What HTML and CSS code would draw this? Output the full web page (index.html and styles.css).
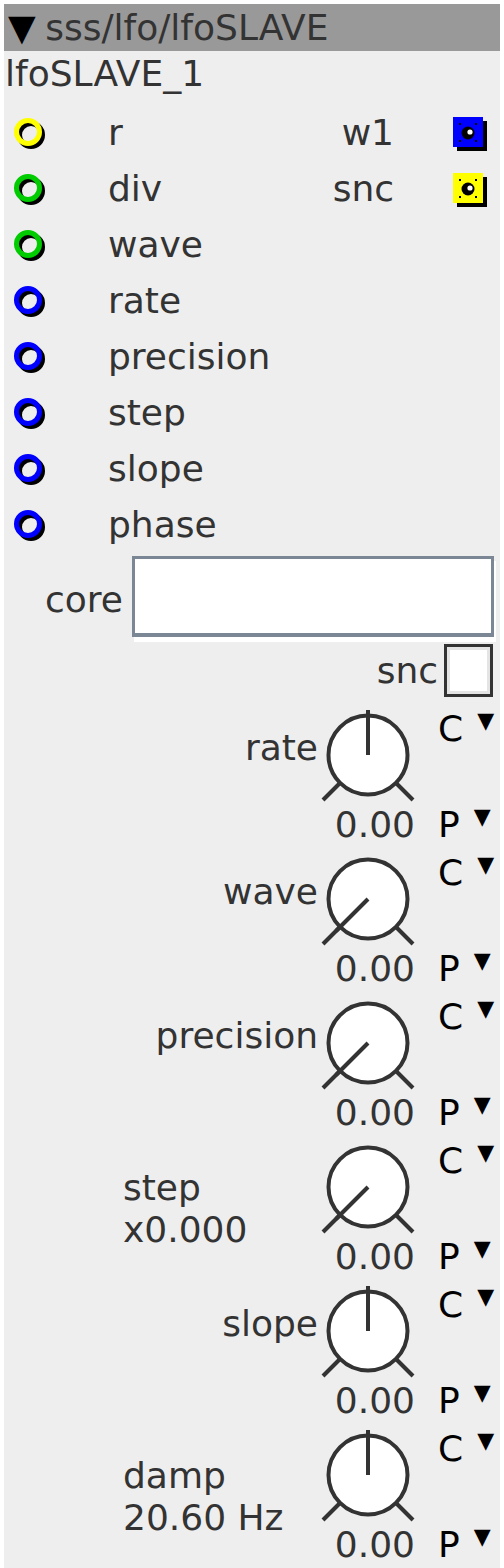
FILE: index.html
```html
<!DOCTYPE html>
<html>
<head>
    <title>lfoSLAVE_1</title>
    <link rel="stylesheet" href="styles.css">
</head>
<body>
    <svg class="defs" width="0" height="0">
        <defs>
            <symbol id="jack" viewBox="0 0 36 36">
                <circle cx="21" cy="21" r="11.5" fill="none" stroke="#000" stroke-width="5"/>
                <circle cx="18" cy="18" r="11.5" fill="none" stroke="currentColor" stroke-width="5"/>
            </symbol>
            <symbol id="plug" viewBox="0 0 38 38">
                <rect x="5" y="8" width="30" height="30" fill="#000"/>
                <rect x="1" y="4" width="30" height="30" fill="currentColor"/>
                <circle cx="16" cy="20" r="6.5" fill="#000"/>
                <circle cx="18" cy="19" r="2.6" fill="#fff"/>
                <rect x="7" y="10" width="2" height="2" fill="#000"/>
                <rect x="23" y="10" width="2" height="2" fill="#000"/>
                <rect x="7" y="27" width="2" height="2" fill="#000"/>
                <rect x="23" y="27" width="2" height="2" fill="#000"/>
            </symbol>
            <symbol id="knob" viewBox="0 0 94 96">
                <line x1="22" y1="73" x2="2" y2="93" stroke="#333" stroke-width="4"/>
                <line x1="72" y1="73" x2="92" y2="93" stroke="#333" stroke-width="4"/>
                <circle cx="47" cy="48" r="39.5" fill="#fff" stroke="#333" stroke-width="4"/>
            </symbol>
        </defs>
    </svg>

    <div class="node">
        <div class="title"><span class="tri">▼</span> sss/lfo/lfoSLAVE</div>
        <div class="name">lfoSLAVE_1</div>

        <div class="ports">
            <div class="port-row">
                <svg class="jack yellow"><use href="#jack"/></svg>
                <span class="in-label">r</span>
                <span class="out-label">w1</span>
                <svg class="plug blue"><use href="#plug"/></svg>
            </div>
            <div class="port-row">
                <svg class="jack green"><use href="#jack"/></svg>
                <span class="in-label">div</span>
                <span class="out-label">snc</span>
                <svg class="plug yellow"><use href="#plug"/></svg>
            </div>
            <div class="port-row">
                <svg class="jack green"><use href="#jack"/></svg>
                <span class="in-label">wave</span>
            </div>
            <div class="port-row">
                <svg class="jack blue"><use href="#jack"/></svg>
                <span class="in-label">rate</span>
            </div>
            <div class="port-row">
                <svg class="jack blue"><use href="#jack"/></svg>
                <span class="in-label">precision</span>
            </div>
            <div class="port-row">
                <svg class="jack blue"><use href="#jack"/></svg>
                <span class="in-label">step</span>
            </div>
            <div class="port-row">
                <svg class="jack blue"><use href="#jack"/></svg>
                <span class="in-label">slope</span>
            </div>
            <div class="port-row">
                <svg class="jack blue"><use href="#jack"/></svg>
                <span class="in-label">phase</span>
            </div>
        </div>

        <div class="field-row">
            <span class="field-label">core</span>
            <div class="field"></div>
        </div>

        <div class="check-row">
            <span>snc</span>
            <div class="check"></div>
        </div>

        <div class="knobs">
            <div class="knob-row">
                <div class="k-label">rate</div>
                <svg class="knob" viewBox="0 0 94 96"><use href="#knob"/><line x1="47" y1="48" x2="47" y2="3"/></svg>
                <div class="k-mode top">C<span class="arrow">▼</span></div>
                <div class="k-value">0.00</div>
                <div class="k-mode">P<span class="arrow">▼</span></div>
            </div>
            <div class="knob-row">
                <div class="k-label">wave</div>
                <svg class="knob" viewBox="0 0 94 96"><use href="#knob"/><line x1="47" y1="48" x2="15" y2="80"/></svg>
                <div class="k-mode top">C<span class="arrow">▼</span></div>
                <div class="k-value">0.00</div>
                <div class="k-mode">P<span class="arrow">▼</span></div>
            </div>
            <div class="knob-row">
                <div class="k-label">precision</div>
                <svg class="knob" viewBox="0 0 94 96"><use href="#knob"/><line x1="47" y1="48" x2="15" y2="80"/></svg>
                <div class="k-mode top">C<span class="arrow">▼</span></div>
                <div class="k-value">0.00</div>
                <div class="k-mode">P<span class="arrow">▼</span></div>
            </div>
            <div class="knob-row">
                <div class="k-label two">step<br>x0.000</div>
                <svg class="knob" viewBox="0 0 94 96"><use href="#knob"/><line x1="47" y1="48" x2="15" y2="80"/></svg>
                <div class="k-mode top">C<span class="arrow">▼</span></div>
                <div class="k-value">0.00</div>
                <div class="k-mode">P<span class="arrow">▼</span></div>
            </div>
            <div class="knob-row">
                <div class="k-label">slope</div>
                <svg class="knob" viewBox="0 0 94 96"><use href="#knob"/><line x1="47" y1="48" x2="47" y2="3"/></svg>
                <div class="k-mode top">C<span class="arrow">▼</span></div>
                <div class="k-value">0.00</div>
                <div class="k-mode">P<span class="arrow">▼</span></div>
            </div>
            <div class="knob-row">
                <div class="k-label two">damp<br>20.60 Hz</div>
                <svg class="knob" viewBox="0 0 94 96"><use href="#knob"/><line x1="47" y1="48" x2="47" y2="3"/></svg>
                <div class="k-mode top">C<span class="arrow">▼</span></div>
                <div class="k-value">0.00</div>
                <div class="k-mode">P<span class="arrow">▼</span></div>
            </div>
        </div>
    </div>
</body>
</html>
```

FILE: styles.css
```css
body {
    margin: 0;
    background-color: #fff;
    font-family: "DejaVu Sans", sans-serif;
}
.defs {
    position: absolute;
}
.node {
    margin: 4px 4px 0 4px;
    width: 496px;
    min-height: 1600px;
    background-color: #eee;
    color: #333;
    font-size: 36px;
}
.title {
    height: 47px;
    line-height: 47px;
    padding-left: 4px;
    background-color: #999;
    white-space: nowrap;
    word-spacing: -2px;
}
.tri {
    color: #000;
}
.name {
    height: 53px;
    line-height: 46px;
    padding-left: 1px;
}
.port-row {
    display: grid;
    grid-template-columns: 104px 1fr auto 106px;
    align-items: center;
    height: 56px;
}
.jack {
    width: 36px;
    height: 36px;
    margin-left: 6px;
}
.plug {
    width: 38px;
    height: 38px;
    margin-left: 58px;
}
.yellow { color: #ffff00; }
.green { color: #00cc00; }
.blue { color: #0000ff; }
.out-label {
    grid-column: 3;
}
.field-row {
    display: flex;
    justify-content: flex-end;
    align-items: center;
    margin-top: 4px;
    padding-right: 6px;
}
.field-label {
    margin-right: 9px;
    padding-top: 5px;
}
.field {
    width: 362px;
    height: 81px;
    box-sizing: border-box;
    border: 3px solid #7b8794;
    border-bottom-width: 4px;
    background-color: #fff;
    box-shadow: 2px 5px 0 #fff;
}
.check-row {
    display: flex;
    justify-content: flex-end;
    align-items: center;
    gap: 6px;
    margin-top: 7px;
    padding-right: 7px;
}
.check {
    width: 49px;
    height: 53px;
    box-sizing: border-box;
    border: 3px solid #333;
    background-color: #fff;
    box-shadow: inset 0 0 0 3px #e4e4e4;
}
.knobs {
    margin-top: 6px;
}
.knob-row {
    display: grid;
    grid-template-columns: 316px 96px 84px;
    grid-template-rows: 100px 44px;
    height: 144px;
}
.k-label {
    grid-row: 1;
    grid-column: 1;
    margin-top: 23px;
    line-height: 44px;
    text-align: right;
    padding-right: 2px;
}
.k-label.two {
    margin-top: 32px;
    line-height: 42px;
    text-align: left;
    padding-left: 119px;
}
.knob {
    grid-row: 1;
    grid-column: 2;
    width: 94px;
    height: 96px;
    margin: 4px 0 0 1px;
}
.knob line {
    stroke: #333;
    stroke-width: 4;
}
.k-value {
    grid-row: 2;
    grid-column: 2;
    line-height: 44px;
    text-align: right;
    padding-right: 1px;
}
.k-mode {
    grid-row: 2;
    grid-column: 3;
    padding-left: 22px;
    line-height: 44px;
    color: #000;
    white-space: nowrap;
}
.k-mode.top {
    grid-row: 1;
    margin-top: 4px;
}
.arrow {
    position: relative;
    top: -13px;
    font-size: 22px;
    margin-left: 14px;
}
```
